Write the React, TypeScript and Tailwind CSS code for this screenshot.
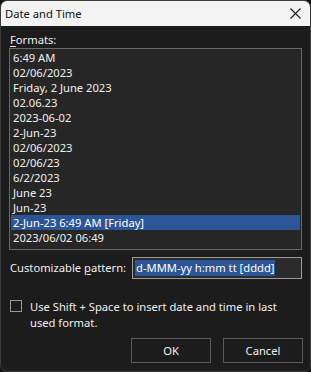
import React from 'react';

const formats = [
  '6:49 AM',
  '02/06/2023',
  'Friday, 2 June 2023',
  '02.06.23',
  '2023-06-02',
  '2-Jun-23',
  '02/06/2023',
  '02/06/23',
  '6/2/2023',
  'June 23',
  'Jun-23',
  '2-Jun-23 6:49 AM [Friday]',
  '2023/06/02 06:49',
];

const SELECTED = 11;

export default function App() {
  return (
    <div
      className="w-[311px] h-[372px] bg-[#111111] text-[11.2px] text-[#f0f0f0]"
      style={{ fontFamily: '"Noto Sans", "Open Sans", sans-serif' }}
    >
      <div className="w-[311px] h-[372px] rounded-[7px] overflow-hidden border border-[#3c3c3c] bg-[#1c1c1c] flex flex-col">
        {/* title bar */}
        <div className="h-[25px] bg-[#f3f3f3] flex items-center justify-between pl-[4px] pr-[9px] text-[#111111]">
          <span className="leading-[16px]">Date and Time</span>
          <svg width="11" height="11" viewBox="0 0 11 11">
            <path d="M0.5 0.5 L10.5 10.5 M10.5 0.5 L0.5 10.5" stroke="#1a1a1a" strokeWidth="1.1" />
          </svg>
        </div>

        <div className="flex flex-col px-[8px] pt-[6px]">
          <div className="pl-[1px] leading-[16px]">
            <span className="underline underline-offset-2">F</span>ormats:
          </div>

          <div className="w-[293px] h-[202px] border border-[#686868] bg-[#262626] p-[1px]">
            {formats.map((f, i) => (
              <div
                key={i}
                className={
                  'h-[15px] leading-[15px] pl-[2px] whitespace-nowrap ' +
                  (i === SELECTED ? 'bg-[#2c5597] text-white' : '')
                }
              >
                {f}
              </div>
            ))}
          </div>

          <div className="flex items-center mt-[7px] h-[22px]">
            <span className="pl-[1px] w-[123px] shrink-0 whitespace-nowrap">
              Customizable <span className="underline underline-offset-2">p</span>attern:
            </span>
            <div className="w-[170px] h-[22px] shrink-0 border border-[#9a9a9a] bg-[#2b2b2b] flex items-center pl-[2px]">
              <span className="bg-[#2c5597] text-white leading-[16px] px-[1px] whitespace-nowrap">
                d-MMM-yy h:mm tt [dddd]
              </span>
            </div>
          </div>

          <div className="flex items-start mt-[21px]">
            <div className="w-[12px] h-[12px] shrink-0 border border-[#9a9a9a] bg-[#1c1c1c] ml-[1px]" />
            <div className="ml-[8px] leading-[16px] -mt-[1px]">
              Use Shift + Space to insert date and time in last
              <br />
              used format.
            </div>
          </div>

          <div className="flex justify-end gap-[12px] mt-[7px]">
            <button className="w-[80px] h-[25px] border border-[#5a5a5a] bg-[#1c1c1c] text-[#f0f0f0] leading-[16px]">
              OK
            </button>
            <button className="w-[80px] h-[25px] border border-[#5a5a5a] bg-[#1c1c1c] text-[#f0f0f0] leading-[16px] mr-[-1px]">
              Cancel
            </button>
          </div>
        </div>
      </div>
    </div>
  );
}
